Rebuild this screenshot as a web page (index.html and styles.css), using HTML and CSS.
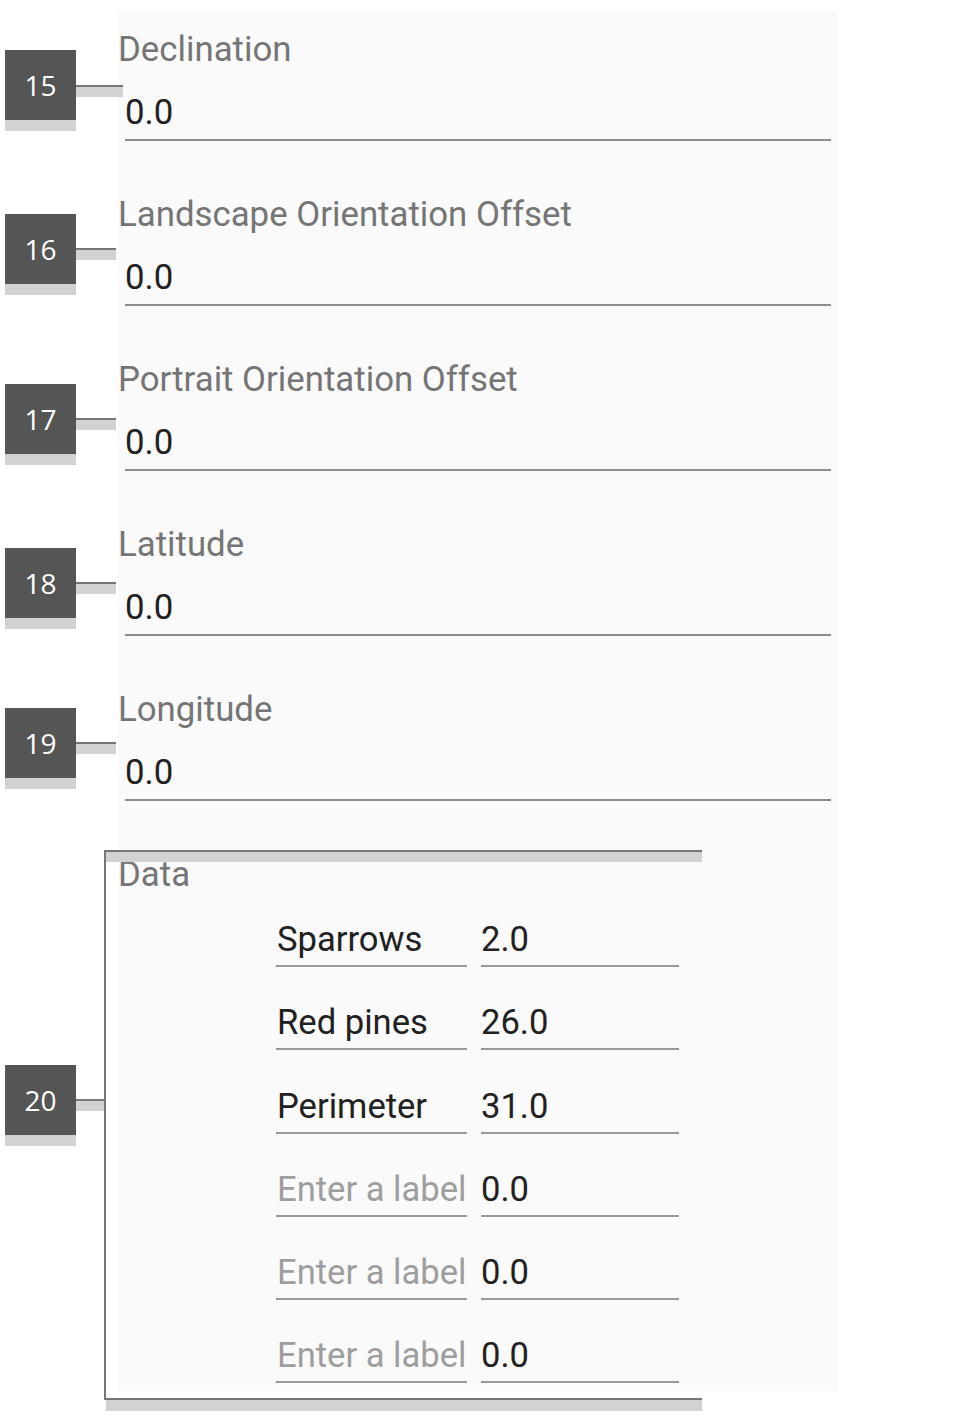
FILE: index.html
```html
<!DOCTYPE html>
<html>
<head>
<meta charset="utf-8">
<link rel="stylesheet" href="styles.css">
</head>
<body>
<div class="panel">
  <div class="field">
    <div class="label">Declination</div>
    <div class="value">0.0</div>
  </div>
  <div class="field">
    <div class="label">Landscape Orientation Offset</div>
    <div class="value">0.0</div>
  </div>
  <div class="field">
    <div class="label">Portrait Orientation Offset</div>
    <div class="value">0.0</div>
  </div>
  <div class="field">
    <div class="label">Latitude</div>
    <div class="value">0.0</div>
  </div>
  <div class="field">
    <div class="label">Longitude</div>
    <div class="value">0.0</div>
  </div>
  <div class="data">
    <div class="label">Data</div>
    <div class="rows">
      <div class="row"><div class="cell key">Sparrows</div><div class="cell num">2.0</div></div>
      <div class="row"><div class="cell key">Red pines</div><div class="cell num">26.0</div></div>
      <div class="row"><div class="cell key">Perimeter</div><div class="cell num">31.0</div></div>
      <div class="row"><div class="cell key placeholder">Enter a label</div><div class="cell num">0.0</div></div>
      <div class="row"><div class="cell key placeholder">Enter a label</div><div class="cell num">0.0</div></div>
      <div class="row"><div class="cell key placeholder">Enter a label</div><div class="cell num">0.0</div></div>
    </div>
  </div>
</div>

<div class="callout c15"><div class="badge">15</div><div class="connector"></div></div>
<div class="callout c16"><div class="badge">16</div><div class="connector"></div></div>
<div class="callout c17"><div class="badge">17</div><div class="connector"></div></div>
<div class="callout c18"><div class="badge">18</div><div class="connector"></div></div>
<div class="callout c19"><div class="badge">19</div><div class="connector"></div></div>
<div class="callout c20"><div class="badge">20</div><div class="connector"></div></div>
<div class="bracket"></div>
</body>
</html>
```
FILE: styles.css
```css
html, body {
  margin: 0;
  padding: 0;
  background: #ffffff;
}
body {
  position: relative;
  width: 956px;
  height: 1420px;
  overflow: hidden;
  font-family: Roboto, "Liberation Sans", sans-serif;
}
.panel {
  margin: 10px 0 0 118px;
  width: 720px;
  height: 1381px;
  box-sizing: border-box;
  padding-top: 19px;
  background: #fafafa;
}
.label {
  font-size: 34.8px;
  line-height: 40px;
  color: #757575;
}
.field {
  margin-bottom: 53px;
}
.value {
  margin: 23px 7px 0 7px;
  font-size: 34.8px;
  line-height: 40px;
  color: #212121;
  padding-bottom: 7px;
  border-bottom: 2px solid #8e8e8e;
}
.data .label {
  margin-top: 1px;
}
.rows {
  margin: 23px 0 0 158px;
  display: flex;
  flex-direction: column;
  gap: 33.3px;
}
.row {
  display: flex;
  gap: 14px;
}
.cell {
  font-size: 34.6px;
  line-height: 40px;
  color: #212121;
  padding-top: 2px;
  padding-bottom: 6px;
  border-bottom: 2px solid #9a9a9a;
  white-space: nowrap;
}
.key { width: 191px; padding-left: 1px; box-sizing: border-box; }
.num { width: 198px; }
.placeholder { color: #9e9e9e; }

.callout {
  position: absolute;
  left: 5px;
  display: flex;
  align-items: flex-start;
}
.badge {
  width: 71px;
  height: 70px;
  background: #555555;
  border-bottom: 11px solid #d2d2d2;
  color: #ffffff;
  font-family: "Open Sans", "Noto Sans", sans-serif;
  font-size: 28px;
  line-height: 70px;
  text-align: center;
}
.connector {
  margin-top: 35px;
  height: 10px;
  border-top: 2px solid #777777;
  background: #d2d2d2;
}
.c15 { top: 50px; }
.c15 .connector { width: 47px; }
.c16 { top: 214px; }
.c16 .connector { width: 40px; margin-top: 34px; }
.c17 { top: 384px; }
.c17 .connector { width: 40px; margin-top: 34px; }
.c18 { top: 548px; }
.c18 .connector { width: 40px; margin-top: 34px; }
.c19 { top: 708px; }
.c19 .connector { width: 40px; margin-top: 34px; }
.c20 { top: 1065px; }
.c20 .connector { width: 28px; margin-top: 34px; }

.bracket {
  position: absolute;
  left: 104px;
  top: 850px;
  width: 598px;
  height: 550px;
  box-sizing: border-box;
  border-top: 2px solid #777777;
  border-left: 2px solid #777777;
  border-bottom: 2px solid #777777;
}
.bracket::before {
  content: "";
  position: absolute;
  left: 0;
  right: 0;
  top: 0;
  height: 10px;
  background: #d2d2d2;
}
.bracket::after {
  content: "";
  position: absolute;
  left: 0;
  right: 0;
  bottom: -13px;
  height: 11px;
  background: #d2d2d2;
}
```
